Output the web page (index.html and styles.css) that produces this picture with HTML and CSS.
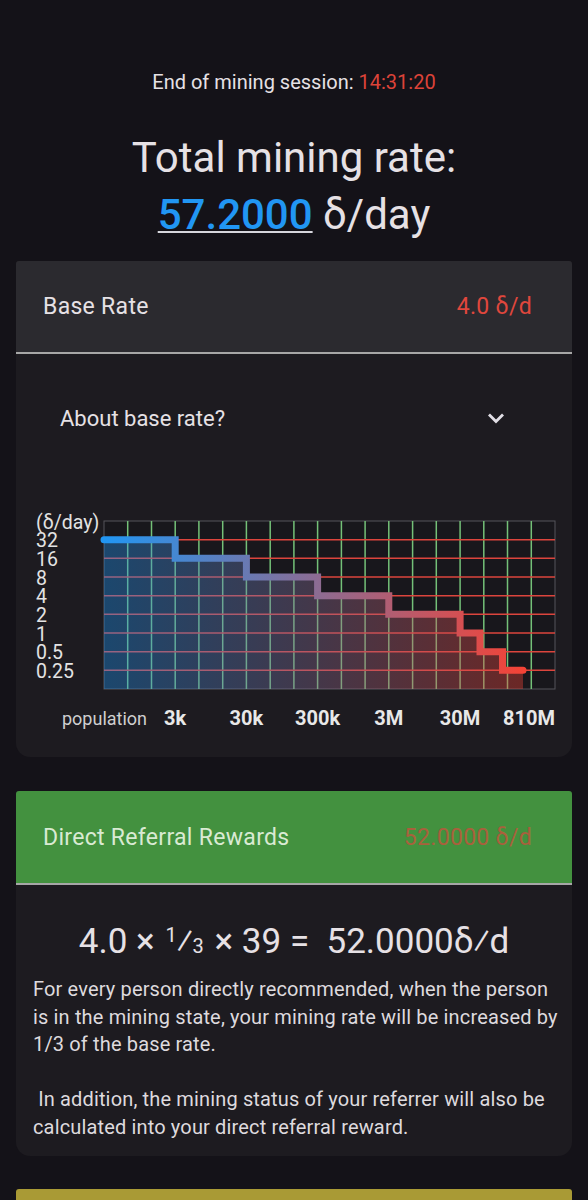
FILE: index.html
```html
<!DOCTYPE html>
<html lang="en">
<head>
  <meta charset="UTF-8">
  <meta name="viewport" content="width=device-width, initial-scale=1.0">
  <title>Mining rate</title>
  <link rel="stylesheet" href="styles.css">
</head>
<body>
  <div class="page">
    <p class="session">End of mining session: <span class="time">14:31:20</span></p>
    <h1 class="total">Total mining rate:<br><a class="rate" href="#">57.2000</a> δ/day</h1>

    <section class="card">
      <div class="card-head">
        <span>Base Rate</span>
        <span class="head-value">4.0 δ/d</span>
      </div>
      <div class="about">
        <span>About base rate?</span>
        <svg class="chevron" width="20" height="12" viewBox="0 0 20 12">
          <path d="M3 2.5L10 9.5L17 2.5" fill="none" stroke="#e2dfe6" stroke-width="2.8"/>
        </svg>
      </div>
      <svg class="chart" viewBox="0 0 556 260">
        <defs>
          <linearGradient id="rateGrad" gradientUnits="userSpaceOnUse" x1="88" y1="0" x2="507" y2="0">
            <stop offset="0" stop-color="#2196f3"/>
            <stop offset="1" stop-color="#f44336"/>
          </linearGradient>
        </defs>
        <rect x="88" y="39" width="451" height="168" fill="#18171c" stroke="#55545a" stroke-width="1"/>
        <path class="grid-v" d="M111.7 39V207M135.5 39V207M159.2 39V207M182.9 39V207M206.7 39V207M230.4 39V207M254.2 39V207M277.9 39V207M301.6 39V207M325.4 39V207M349.1 39V207M372.8 39V207M396.6 39V207M420.3 39V207M444.1 39V207M467.8 39V207M491.5 39V207M515.3 39V207"/>
        <path class="grid-h" d="M88 57.7H539M88 76.3H539M88 95H539M88 113.7H539M88 132.3H539M88 151H539M88 169.7H539M88 188.3H539"/>
        <path class="area" d="M88 57.7H159.2V76.3H230.4V95H301.6V113.7H372.8V132.3H444.1V151H464V169.7H486.5V188.3H507V207H88Z"/>
        <path class="step" d="M88 57.7H159.2V76.3H230.4V95H301.6V113.7H372.8V132.3H444.1V151H464V169.7H486.5V188.3H507"/>

        <text class="tick" x="20" y="40">(δ/day)</text>
        <text class="tick" x="20" y="58.7">32</text>
        <text class="tick" x="20" y="77.3">16</text>
        <text class="tick" x="20" y="96">8</text>
        <text class="tick" x="20" y="114.7">4</text>
        <text class="tick" x="20" y="133.3">2</text>
        <text class="tick" x="20" y="152">1</text>
        <text class="tick" x="20" y="170.7">0.5</text>
        <text class="tick" x="20" y="189.3">0.25</text>

        <text class="axis-name" x="46" y="236">population</text>
        <text class="pop" x="159.2" y="236">3k</text>
        <text class="pop" x="230.4" y="236">30k</text>
        <text class="pop" x="301.6" y="236">300k</text>
        <text class="pop" x="372.8" y="236">3M</text>
        <text class="pop" x="444.1" y="236">30M</text>
        <text class="pop" x="513" y="236">810M</text>
      </svg>
    </section>

    <section class="card">
      <div class="card-head green">
        <span>Direct Referral Rewards</span>
        <span class="head-value">52.0000 δ/d</span>
      </div>
      <div class="formula">4.0 × <span class="frac"><span class="num">1</span>⁄<span class="den">3</span></span> × 39 =&nbsp; 52.0000δ⁄d</div>
      <p class="desc">For every person directly recommended, when the person is in the mining state, your mining rate will be increased by 1/3 of the base rate.

 In addition, the mining status of your referrer will also be calculated into your direct referral reward.</p>
    </section>

    <div class="card-head yellow"></div>
  </div>
</body>
</html>
```

FILE: styles.css
```css
body {
  margin: 0;
  background-color: #141218;
  font-family: Roboto, "Noto Sans", sans-serif;
  color: #e6e1e5;
}
.page {
  padding: 68px 16px 0;
}
.session {
  margin: 0;
  text-align: center;
  font-size: 20px;
  line-height: 28px;
}
.time {
  color: #dc4339;
}
.total {
  margin: 33px 0 18px;
  text-align: center;
  font-size: 42px;
  font-weight: 400;
  line-height: 57px;
}
.rate {
  color: #2196f3;
  font-weight: 500;
  text-decoration: underline;
  text-decoration-color: #d6d6dc;
  text-decoration-thickness: 2px;
  text-underline-offset: 2px;
}
.card {
  background-color: #1d1b20;
  border-radius: 3px 3px 14px 14px;
  overflow: hidden;
}
.card + .card {
  margin-top: 34px;
}
.card-head {
  height: 91px;
  display: flex;
  align-items: center;
  justify-content: space-between;
  padding: 0 40px 0 27px;
  background-color: #2b2a2f;
  border-bottom: 2px solid #a7a7a7;
  font-size: 23px;
  letter-spacing: 0.3px;
}
.head-value {
  color: #e0473d;
}
.card-head.green {
  height: 92px;
  background-color: #43913f;
  color: #d9ead3;
}
.green .head-value {
  color: #a9603c;
}
.card-head.yellow {
  margin-top: 33px;
  height: 92px;
  background-color: #a99a35;
  border-bottom: none;
  border-radius: 3px 3px 0 0;
}
.about {
  height: 128px;
  display: flex;
  align-items: center;
  justify-content: space-between;
  padding: 0 66px 0 44px;
  font-size: 22px;
}
.chart {
  display: block;
  width: 556px;
  height: 260px;
  margin-bottom: 15px;
}
.grid-v {
  stroke: #74c078;
  stroke-width: 1.5;
}
.grid-h {
  stroke: #dc453d;
  stroke-width: 1.5;
}
.area {
  fill: url(#rateGrad);
  fill-opacity: 0.38;
}
.step {
  fill: none;
  stroke: url(#rateGrad);
  stroke-width: 7;
  stroke-linecap: round;
}
.tick {
  font-size: 19.5px;
  fill: #e3e3e3;
  dominant-baseline: central;
}
.axis-name {
  font-size: 18px;
  fill: #cfcfcf;
  dominant-baseline: central;
}
.pop {
  font-size: 20px;
  font-weight: 700;
  fill: #e8e8e8;
  text-anchor: middle;
  dominant-baseline: central;
}
.formula {
  margin-top: 35px;
  text-align: center;
  font-size: 35px;
  line-height: 44px;
}
.frac {
  margin: 0 2px;
}
.frac .num,
.frac .den {
  font-size: 20px;
  line-height: 0;
}
.frac .num {
  vertical-align: 11px;
}
.desc {
  margin: 12px 0 0;
  padding: 0 8px 15px 17px;
  font-size: 20px;
  letter-spacing: 0.15px;
  line-height: 27.5px;
  white-space: pre-wrap;
  color: #dedade;
}
```
